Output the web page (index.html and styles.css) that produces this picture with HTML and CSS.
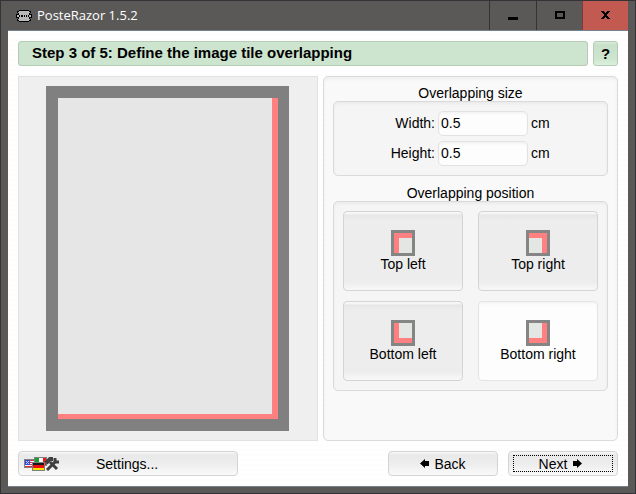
FILE: index.html
```html
<!DOCTYPE html>
<html lang="en">
<head>
<meta charset="utf-8">
<title>PosteRazor 1.5.2</title>
<link rel="stylesheet" href="styles.css">
</head>
<body>
<div class="window">
  <header class="titlebar">
    <svg class="app-icon" width="16" height="13" viewBox="0 0 16 13" shape-rendering="crispEdges" aria-hidden="true">
      <path fill="#000" d="M3 1h10v1h2v2h-1v1h2v4h-2v1h1v2h-2v1H3v-1H1v-2h1V9H0V5h2V4H1V2h2z"/>
      <path fill="#b8b8b8" d="M3 2h10v1h1v1h-1v2h2v2h-2v2h1v1h-1v1H3v-1H2v-1h1V8H1V6h2V4H2V3h1z"/>
      <path fill="#000" d="M3 6h1v2H3zM5 6h2v2H5zM8 6h1v2H8zM10 6h1v2h-1zM12 6h1v2h-1z"/>
    </svg>
    <h1 class="app-name">PosteRazor 1.5.2</h1>
    <button class="win-btn" aria-label="Minimize"><svg width="10" height="9" viewBox="0 0 10 9" aria-hidden="true"><path d="M0 6h10v3H0z"/></svg></button>
    <button class="win-btn" aria-label="Maximize"><svg width="10" height="8" viewBox="0 0 10 8" aria-hidden="true"><path fill-rule="evenodd" d="M0 0h10v8H0zM2 2v4h6V2z"/></svg></button>
    <button class="win-btn close" aria-label="Close"><svg width="9" height="8" viewBox="0 0 9 8" shape-rendering="crispEdges" aria-hidden="true"><path d="M0 0h3v1h1v1h1V1h1V0h3v1H8v1H7v1H6v2h1v1h1v1h1v1H6V7H5V6H4v1H3v1H0V7h1V6h1V5h1V3H2V2H1V1H0z"/></svg></button>
  </header>
  <main class="client">
    <div class="step">
      <h2 class="step-title">Step 3 of 5: Define the image tile overlapping</h2>
      <button class="help">?</button>
    </div>
    <div class="body">
      <section class="preview" aria-label="Preview">
        <div class="sheet"><div class="tile"></div></div>
      </section>
      <section class="options">
        <h3 class="group-title">Overlapping size</h3>
        <div class="group sizes">
          <div class="field"><label for="w">Width:</label><input id="w" type="text" value="0.5"><span>cm</span></div>
          <div class="field"><label for="h">Height:</label><input id="h" type="text" value="0.5"><span>cm</span></div>
        </div>
        <h3 class="group-title">Overlapping position</h3>
        <div class="group positions">
          <button class="pos"><span class="mark top left"></span>Top left</button>
          <button class="pos"><span class="mark top right"></span>Top right</button>
          <button class="pos"><span class="mark bottom left"></span>Bottom left</button>
          <button class="pos selected" aria-pressed="true"><span class="mark bottom right"></span>Bottom right</button>
        </div>
      </section>
    </div>
    <footer class="actions">
      <button class="btn settings">
        <svg width="36" height="15" viewBox="0 0 36 15" shape-rendering="crispEdges" aria-hidden="true">
          <path fill="#808080" d="M0 3h13v9H0z"/>
          <path fill="#fff" d="M1 4h11v7H1z"/>
          <path fill="#e03040" d="M1 4h11v1H1zM1 6h11v1H1zM1 8h11v1H1zM1 10h11v1H1z"/>
          <path fill="#3a48d8" d="M1 4h5v5H1z"/>
          <path fill="#c8ccff" d="M2 5h1v1H2zM4 5h1v1H4zM3 6h1v1H3zM2 7h1v1H2zM4 7h1v1H4z"/>
          <path fill="#808080" d="M10 1h13v9H10z"/>
          <path fill="#fff" d="M11 2h11v7H11z"/>
          <path fill="#10a030" d="M11 2h4v7h-4z"/>
          <path fill="#f01818" d="M19 2h3v7h-3z"/>
          <path fill="#808080" d="M8 6h13v9H8z"/>
          <path fill="#181818" d="M9 7h11v2H9z"/>
          <path fill="#e81010" d="M9 9h11v3H9z"/>
          <path fill="#ffe000" d="M9 12h11v2H9z"/>
          <g fill="none" stroke="#404040" shape-rendering="auto">
            <path stroke-width="3" d="M26 6l7 7"/>
            <path stroke-width="3" d="M23 14l8-8"/>
            <path stroke-width="4" d="M22 7l4-4h3"/>
            <path stroke-width="3" d="M31 2v3l1 1h3"/>
          </g>
        </svg>
        <span>Settings...</span>
      </button>
      <button class="btn nav back"><svg width="10" height="9" viewBox="0 0 10 9" aria-hidden="true"><path d="M0 4.500L5 0v2h4v5H5v2z"/></svg>Back</button>
      <button class="btn nav next">Next<svg width="10" height="9" viewBox="0 0 10 9" aria-hidden="true"><path d="M9 4.500L4 0v2H0v5h4v2z"/></svg></button>
    </footer>
  </main>
</div>
</body>
</html>
```
FILE: styles.css
```css
* { box-sizing: border-box; }
body {
  margin: 0;
  font: 14px/18px "Liberation Sans", Arial, sans-serif;
  color: #000;
}
h1, h2, h3 { margin: 0; font: inherit; }
button, input { font: inherit; color: inherit; margin: 0; padding: 0; }
svg { flex: none; }

.window {
  display: flex;
  flex-direction: column;
  min-height: 100vh;
  padding: 0 7px 6px;
  border: 1px solid #333338;
  background: #5b5958;
}
.titlebar { display: flex; align-items: center; height: 29px; padding-left: 8px; }
.app-name {
  flex: 1;
  padding: 0 0 2px 5px;
  font: 13px/16px "Open Sans", "Noto Sans", sans-serif;
  color: #fff;
}
.win-btn {
  display: flex;
  align-items: center;
  justify-content: center;
  width: 46px;
  height: 30px;
  border: 0;
  border-left: 1px solid #333;
  border-bottom: 1px solid #333;
  background: #5b5958;
}
.win-btn:first-of-type { width: 47px; }
.win-btn.close { background: #c25a51; border-color: #7c3d38; }

.client {
  flex: 1;
  display: flex;
  flex-direction: column;
  gap: 10px;
  padding: 10px;
  border-top: 1px solid #75828e;
  border-bottom: 1px solid #75828e;
  background: repeating-linear-gradient(#fff 0 3px, #fdfdfd 3px 5px);
}
.step { display: flex; gap: 5px; height: 25px; }
.step-title, .help {
  border: 1px solid #b5cbb5;
  border-radius: 3px;
  background: #cde4cf;
  font-weight: bold;
  font-size: 15px;
}
.step-title { flex: 1; padding-left: 13px; line-height: 22px; }
.help {
  width: 25px;
  background: linear-gradient(#d8ecd9 0, #c8dfca 3px, #cde4cf 16px, #daf0db 100%);
}

.body {
  flex: 1;
  display: grid;
  grid-template-columns: 300fr 295fr;
  gap: 5px;
}
.preview {
  display: flex;
  padding: 9px 28px 9px 27px;
  border: 1px solid #e2e2e2;
  background: #efefef;
}
.sheet { flex: 1; display: flex; padding: 12px 11px 12px 12px; background: #808080; }
.tile {
  flex: 1;
  border: solid #ff8080;
  border-width: 0 6px 5px 0;
  background: #e6e6e6;
}
.options, .group { border: 1px solid #dadada; border-radius: 5px; }
.options {
  padding: 8px 9px;
  background: #f9f9f9;
  box-shadow: inset 0 2px 3px #eee;
}
.group-title { height: 16px; line-height: 16px; text-align: center; }
.group { background: #f5f5f5; box-shadow: inset 0 2px 3px #ebebeb; }
.sizes {
  display: grid;
  gap: 5px;
  margin-bottom: 9px;
  padding: 9px;
}
.field { display: flex; align-items: center; gap: 3px; line-height: 16px; }
.field label, .field span { padding-bottom: 1px; }
.field label { width: 92px; text-align: right; }
.field input {
  width: 90px;
  height: 25px;
  padding: 0 2px 1px;
  border: 1px solid #e2e2e2;
  border-radius: 5px;
  background: #fdfdfd;
  box-shadow: inset 0 2px 2px #f4f4f4;
}
.positions {
  display: grid;
  grid-template-columns: 1fr 1fr;
  gap: 10px 15px;
  padding: 9px;
}
.pos {
  display: flex;
  flex-direction: column;
  align-items: center;
  height: 80px;
  padding-top: 18px;
  border: 1px solid #d4d4d4;
  border-radius: 4px;
  line-height: 16px;
  background: linear-gradient(#f8f8f8 0, #f4f4f4 2px, #e6e6e6 3px, #ededed 8px, #ededed 70px, #f8f8f8 100%);
}
.pos.selected {
  border-color: #e4e4e4;
  background: #fdfdfd;
  box-shadow: inset 0 2px 2px #f6f6f6;
}
.mark {
  width: 24px;
  height: 26px;
  border: 3px solid #858585;
  background: #e3e6e2;
}
.mark.top.left { box-shadow: inset 5px 5px #ff8080; }
.mark.top.right { box-shadow: inset -5px 5px #ff8080; }
.mark.bottom.left { box-shadow: inset 5px -5px #ff8080; }
.mark.bottom.right { box-shadow: inset -5px -5px #ff8080; }

.actions { display: flex; gap: 10px; height: 25px; }
.btn {
  display: flex;
  align-items: center;
  border: 1px solid #d4d4d4;
  border-radius: 4px;
  line-height: 16px;
  background: linear-gradient(#f8f8f8 0, #e9e9e9 3px, #ededed 12px, #fafafa 100%);
}
.settings { width: 220px; margin-right: auto; padding: 0 5px; gap: 36px; }
.nav { justify-content: center; width: 110px; gap: 4px; }
.next { position: relative; gap: 6px; padding-right: 4px; }
.next::after {
  content: "";
  position: absolute;
  inset: 3px 4px;
  border: 1px dotted #000;
}
```
